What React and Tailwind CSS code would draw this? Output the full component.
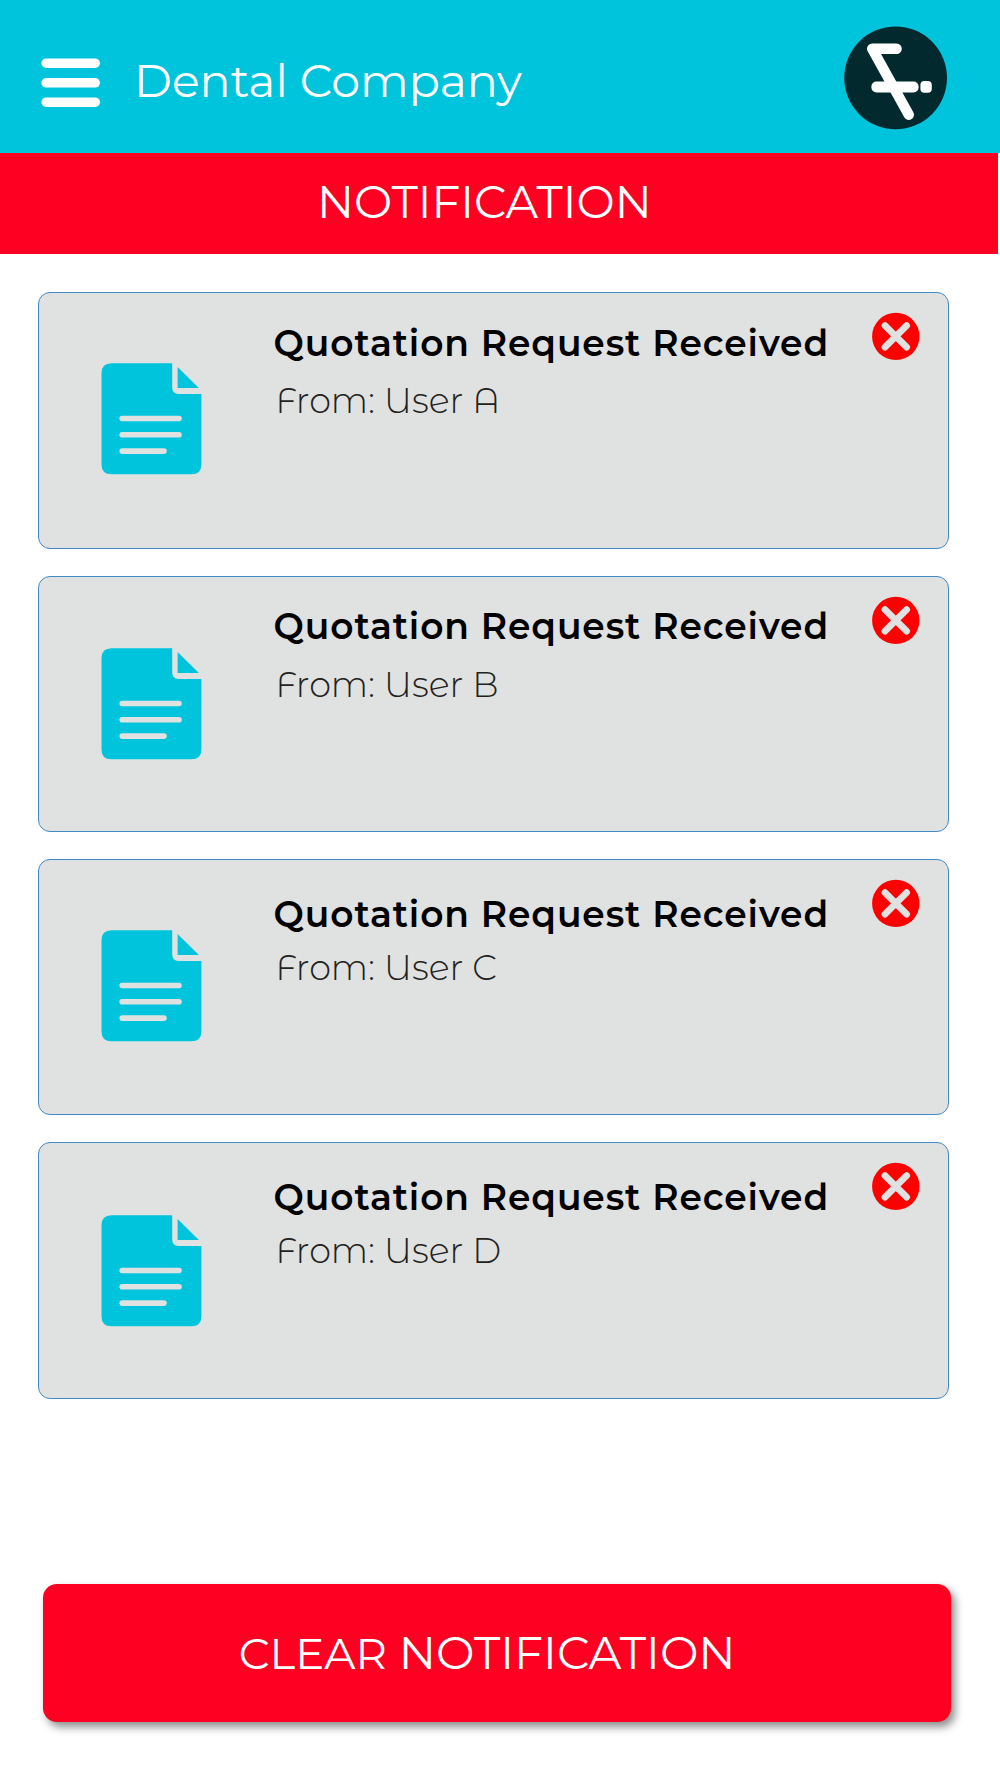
import React, { useState } from 'react';

const initialNotifications = [
  { id: 1, title: 'Quotation Request Received', from: 'User A', iconClass: 'mt-[70px]', titleClass: 'mt-[28px] mb-[14px]' },
  { id: 2, title: 'Quotation Request Received', from: 'User B', iconClass: 'mt-[71.5px]', titleClass: 'mt-[27.5px] mb-[14.5px]' },
  { id: 3, title: 'Quotation Request Received', from: 'User C', iconClass: 'mt-[70px]', titleClass: 'mt-[32px] mb-[10px]' },
  { id: 4, title: 'Quotation Request Received', from: 'User D', iconClass: 'mt-[71.5px]', titleClass: 'mt-[31.8px] mb-[10.2px]' },
];

// --- ICONS ---
const MenuIcon = () => (
  <svg width="59" height="50" viewBox="0 0 59 50" fill="#ffffff" className="block">
    <rect x="0.4" y="0.4" width="58.6" height="9.6" rx="4.8" />
    <rect x="0.4" y="20" width="58.6" height="9.6" rx="4.8" />
    <rect x="0.4" y="39.4" width="58.6" height="9.6" rx="4.8" />
  </svg>
);

const Logo = () => (
  <svg width="104" height="104" viewBox="0 0 104 104" className="block">
    <circle cx="51.6" cy="51.8" r="51.4" fill="#02292d" />
    <path d="M52.6 22.8H28.2L64.8 88.8" fill="none" stroke="#ffffff" strokeWidth="10.4" strokeLinecap="round" strokeLinejoin="round" />
    <rect x="27.4" y="55.6" width="47.2" height="10.8" rx="5" fill="#ffffff" />
    <rect x="76.4" y="55" width="11.4" height="11.8" rx="4" fill="#ffffff" />
  </svg>
);

const DocumentIcon = () => (
  <svg width="101" height="112" viewBox="0 0 101 112" className="block">
    <path d="M10.5 0.3H71.2V24.5Q71.2 31 77.5 31H100.4V101.3Q100.4 111.3 90.4 111.3H10.5Q0.5 111.3 0.5 101.3V10.3Q0.5 0.3 10.5 0.3Z" fill="#00c4dc" />
    <path d="M76.6 4L97.9 25H76.6Z" fill="#00c4dc" />
    <path d="M21.2 55.5H78M21.2 71.8H78M21.2 88.1H63" stroke="#e0e2e1" strokeWidth="5.6" strokeLinecap="round" />
  </svg>
);

const CloseIcon = () => (
  <svg width="48" height="49" viewBox="0 0 48 49" className="block">
    <circle cx="23.8" cy="24.4" r="23.7" fill="#ff0000" />
    <path d="M13 13.6L34.6 35.2M34.6 13.6L13 35.2" stroke="#e0e2e1" strokeWidth="6.8" strokeLinecap="round" />
  </svg>
);

// --- CARD ---
const NotificationCard = ({ item, onRemove }) => (
  <div className="flex items-start w-[911px] h-[256.4px] bg-[#e0e2e1] border border-[#4389c6] rounded-[12px]">
    <div className={`ml-[62px] shrink-0 ${item.iconClass}`}><DocumentIcon /></div>
    <div className="ml-[71.6px] whitespace-nowrap">
      <h2 className={`text-[36px] leading-[44px] font-semibold tracking-[0.92px] text-black ${item.titleClass}`}>{item.title}</h2>
      <p className="pl-[2px] font-['Montserrat_Alternates','Montserrat',sans-serif] text-[35px] leading-[43px] font-light text-[#231f20]">From: {item.from}</p>
    </div>
    <button onClick={() => onRemove(item.id)} aria-label="Remove" className="ml-auto mr-[28px] mt-[19px] shrink-0 cursor-pointer"><CloseIcon /></button>
  </div>
);

const App = () => {
  const [notifications, setNotifications] = useState(initialNotifications);

  const handleRemove = (id) => setNotifications(notifications.filter(n => n.id !== id));

  return (
    <div className="w-[1000px] h-[1778px] bg-white flex flex-col overflow-hidden font-['Montserrat','Inter',sans-serif]">
      {/* Header */}
      <header className="h-[153px] shrink-0 bg-[#00c4dc] flex items-start pl-[41px] pr-[52px]">
        <button aria-label="Menu" className="mt-[58px] cursor-pointer"><MenuIcon /></button>
        <h1 className="ml-[34px] mt-[53px] text-[45.9px] leading-[57px] font-normal text-white">Dental Company</h1>
        <div className="ml-auto mt-[26px]"><Logo /></div>
      </header>

      {/* Page title */}
      <div className="w-[998px] h-[101px] shrink-0 bg-[#fd0022] pl-[317px] pt-[21px]">
        <h2 className="text-[45.5px] leading-[56px] font-normal text-white">NOTIFICATION</h2>
      </div>

      {/* List */}
      <main className="h-[1144.7px] shrink-0 pt-[38.4px] pl-[38px] flex flex-col gap-[27px]">
        {notifications.map(item => (
          <NotificationCard key={item.id} item={item} onRemove={handleRemove} />
        ))}
      </main>

      {/* Clear all */}
      <div className="mt-[185px] pl-[42.5px]">
        <button onClick={() => setNotifications([])} className="block w-[908.5px] h-[138.6px] rounded-[14px] bg-[#fd0022] shadow-[4px_5px_8px_rgba(0,0,0,0.45)] pl-[196.2px] pt-[1px] text-left text-[45.8px] leading-[56px] font-normal text-white whitespace-nowrap cursor-pointer">
          <span className="text-[43.5px]">CLEAR </span>
          <span className="ml-[0.5px]">NOTIFICATION</span>
        </button>
      </div>
    </div>
  );
};

export default App;
